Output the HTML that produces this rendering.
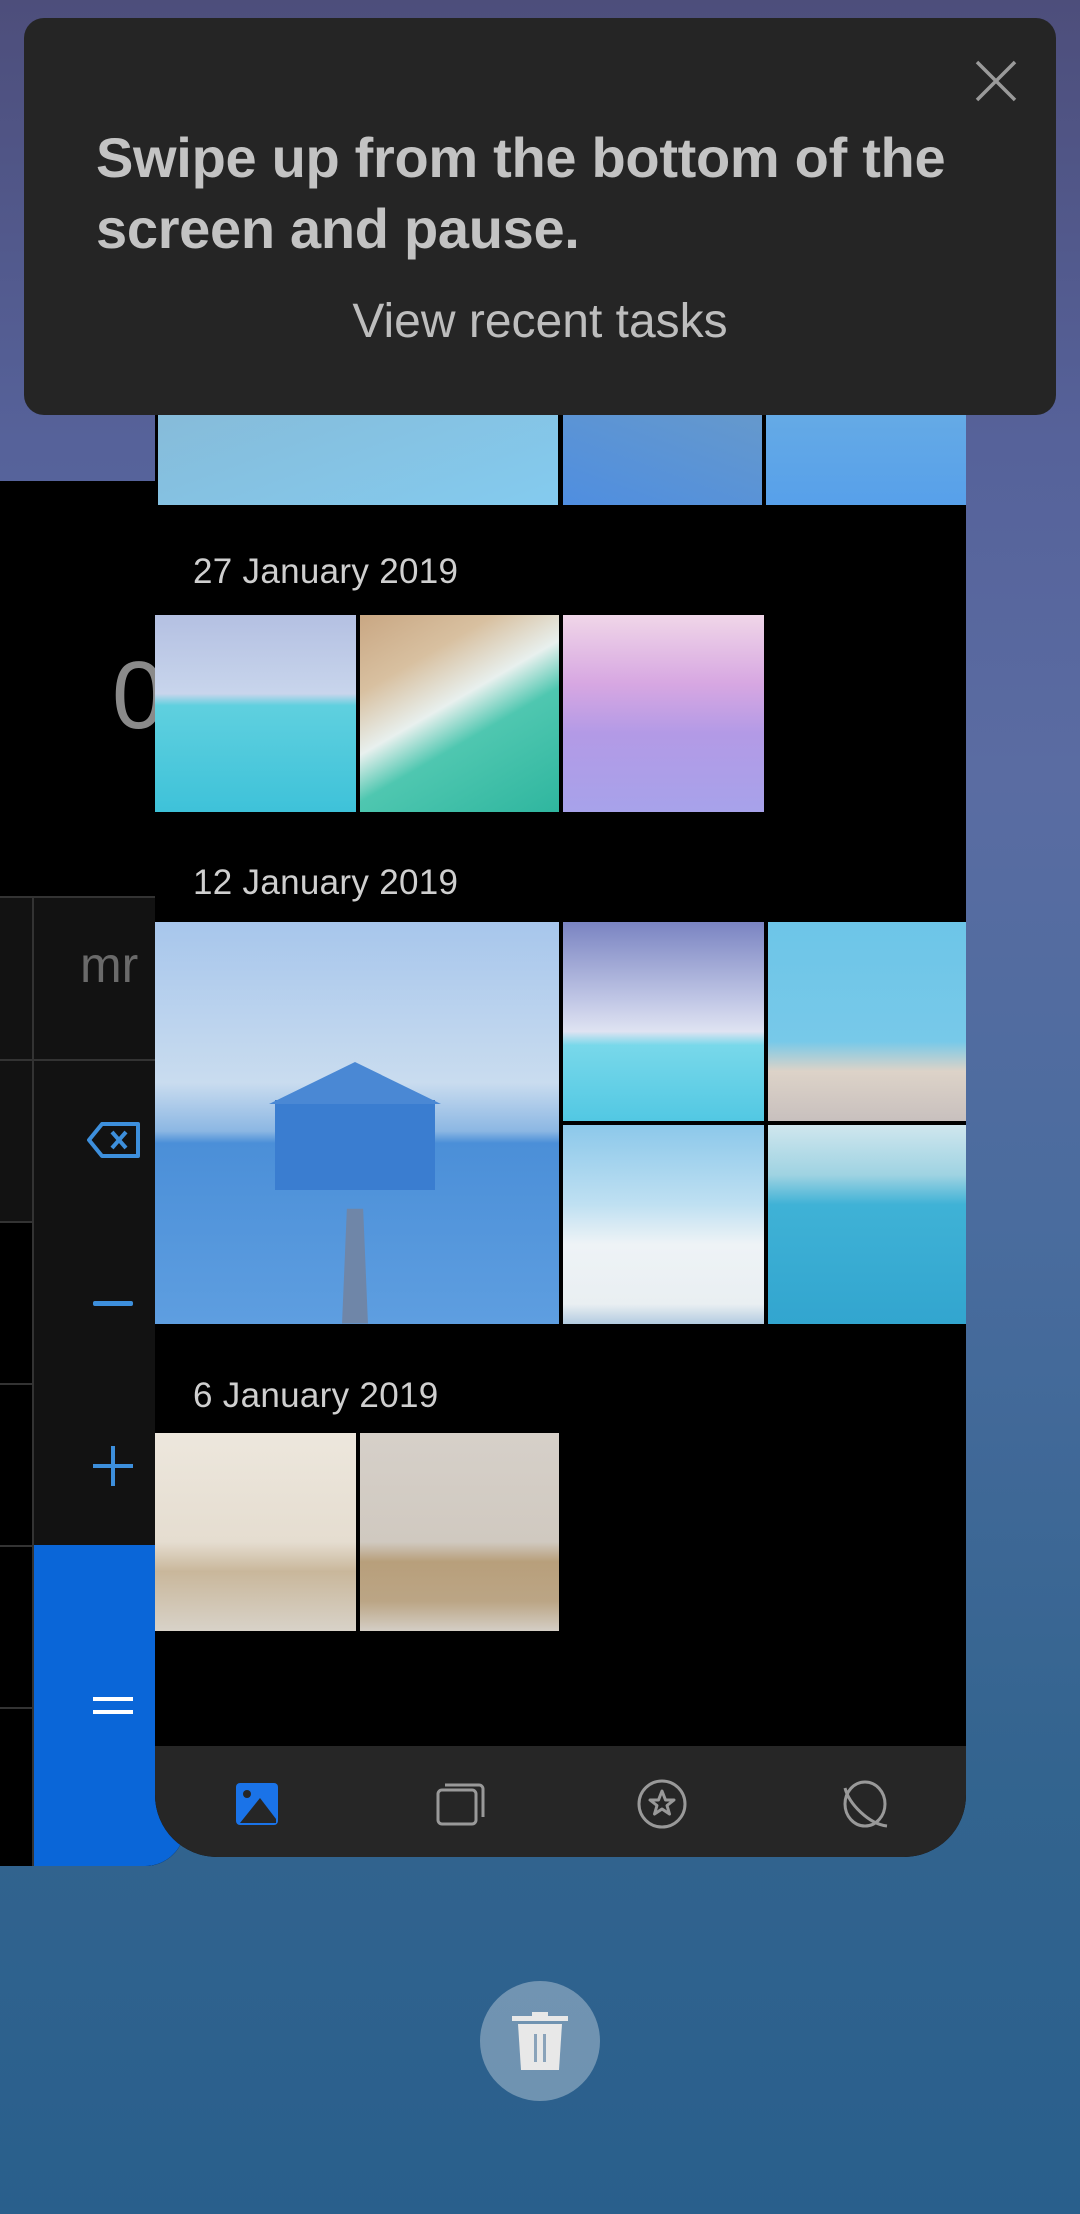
<!DOCTYPE html>
<html><head><meta charset="utf-8"><style>
*{margin:0;padding:0;box-sizing:border-box}
body{width:1080px;height:2214px;overflow:hidden;position:relative;font-family:"Liberation Sans",sans-serif;
background:linear-gradient(180deg,#4d4e7b 0%,#56629a 20%,#5a6ca2 35%,#4a6c9e 55%,#33648f 80%,#295f8c 100%)}
.abs{position:absolute}
.calc{left:0;top:481px;width:185px;height:1385px;background:#000;border-bottom-right-radius:40px;overflow:hidden}
.cell{position:absolute;left:0;width:185px;background:#121212;border-top:2px solid #333}
.divv{position:absolute;left:32px;top:415px;width:2px;height:1000px;background:#333}
.card{left:155px;top:380px;width:811px;height:1477px;background:#000;border-bottom-left-radius:62px;border-bottom-right-radius:62px;overflow:hidden}
.img{position:absolute}
.lbl{position:absolute;left:38px;color:#cfcfcf;font-size:35px;letter-spacing:0.3px}
.nav{position:absolute;left:0;bottom:0;width:100%;height:111px;background:#262626}
.tip{left:24px;top:18px;width:1032px;height:397px;background:#252525;border-radius:20px}
</style></head><body>

<div class="abs calc">
  <div class="abs" style="left:112px;top:160px;font-size:96px;color:#8a8a8a">0</div>
  <div class="cell" style="top:415px;height:163px"></div>
  <div class="cell" style="top:578px;height:162px"></div>
  <div class="cell" style="top:740px;height:162px;background:#000"></div>
  <div class="cell" style="top:902px;height:162px;background:#000"></div>
  <div class="cell" style="top:1064px;height:162px;background:#000"></div>
  <div class="cell" style="top:1226px;height:160px;background:#000"></div>
  <div class="abs" style="left:34px;top:740px;width:151px;height:324px;background:#121212"></div>
  <div class="abs" style="left:34px;top:1064px;width:151px;height:330px;background:#0a66d8;border-bottom-right-radius:40px"></div>
  <div class="divv"></div>
  <div class="abs" style="left:80px;top:455px;font-size:50px;color:#6a6a6a">mr</div>
  <svg class="abs" style="left:86px;top:640px" width="56" height="38" viewBox="0 0 56 38"><path d="M16 3H52V35H16L3 19Z" fill="none" stroke="#3d8fdc" stroke-width="4" stroke-linejoin="round"/><path d="M26 11L40 27M40 11L26 27" stroke="#3d8fdc" stroke-width="4"/></svg>
  <div class="abs" style="left:93px;top:820px;width:40px;height:5px;background:#3d8fdc;border-radius:2px"></div>
  <div class="abs" style="left:93px;top:983px;width:40px;height:4px;background:#3d8fdc"></div>
  <div class="abs" style="left:111px;top:965px;width:4px;height:40px;background:#3d8fdc"></div>
  <div class="abs" style="left:93px;top:1216px;width:40px;height:4px;background:#fff"></div>
  <div class="abs" style="left:93px;top:1229px;width:40px;height:4px;background:#fff"></div>
</div>

<div class="abs card">
  <div class="img" style="left:3px;top:0;width:400px;height:125px;background:linear-gradient(160deg,#86b9d6,#84cbef)"></div>
  <div class="img" style="left:408px;top:0;width:199px;height:125px;background:linear-gradient(200deg,#6a9bc8,#4f8ee0)"></div>
  <div class="img" style="left:611px;top:0;width:200px;height:125px;background:linear-gradient(180deg,#6aaee4,#57a0ea)"></div>
  <div class="lbl" style="top:172px">27 January 2019</div>
  <div class="img" style="left:0;top:235px;width:201px;height:197px;background:linear-gradient(180deg,#b4c0e2 0%,#c8d5ec 40%,#5fd0df 46%,#3ec2d9 100%)"></div>
  <div class="img" style="left:205px;top:235px;width:199px;height:197px;background:linear-gradient(150deg,#c9a783 0%,#d8c0a0 25%,#e8f0ee 45%,#4fc7b0 60%,#2fb69f 100%)"></div>
  <div class="img" style="left:408px;top:235px;width:201px;height:197px;background:linear-gradient(180deg,#f0d6e8 0%,#d7a7e2 35%,#b39ae6 60%,#a7a2ea 100%)"></div>
  <div class="lbl" style="top:483px">12 January 2019</div>
  <div class="img" style="left:0;top:542px;width:404px;height:402px;background:linear-gradient(180deg,#a7c6ec 0%,#c9dcef 40%,#8cb7e3 52%,#4b8fd8 55%,#5e9ee0 100%)">
    <div class="abs" style="left:120px;top:178px;width:160px;height:90px;background:#3a7dd0"></div>
    <div class="abs" style="left:114px;top:140px;width:0;height:0;border-left:86px solid transparent;border-right:86px solid transparent;border-bottom:42px solid #4a88d4"></div>
    <div class="abs" style="left:190px;top:260px;width:20px;height:142px;background:#6f86a8;transform:perspective(200px) rotateX(40deg)"></div>
  </div>
  <div class="img" style="left:408px;top:542px;width:201px;height:199px;background:linear-gradient(180deg,#7a84c2 0%,#c2c8e6 40%,#dfe3f2 55%,#78d8ea 62%,#52c8e3 100%)"></div>
  <div class="img" style="left:613px;top:542px;width:198px;height:199px;background:linear-gradient(180deg,#6dc5e8 0%,#77c9e9 60%,#ddd3c8 75%,#c8c0be 100%)"></div>
  <div class="img" style="left:408px;top:745px;width:201px;height:199px;background:linear-gradient(180deg,#8cc8ea 0%,#bfe0f2 40%,#eef3f6 60%,#e9eff2 90%,#b3cbe0 100%)"></div>
  <div class="img" style="left:613px;top:745px;width:198px;height:199px;background:linear-gradient(180deg,#cfe6ee 0%,#9fd3e2 25%,#3fb2d6 40%,#32a5cf 100%)"></div>
  <div class="lbl" style="top:996px">6 January 2019</div>
  <div class="img" style="left:0;top:1053px;width:201px;height:198px;background:linear-gradient(180deg,#ede7dd 0%,#e5ddd0 55%,#c9b79b 70%,#d8d2c8 100%)"></div>
  <div class="img" style="left:205px;top:1053px;width:199px;height:198px;background:linear-gradient(180deg,#d6d0c9 0%,#d0c9c0 55%,#b89f7b 65%,#bba585 85%,#d4cec5 100%)"></div>
  <div class="nav">
    <svg class="abs" style="left:79px;top:35px" width="46" height="46" viewBox="0 0 46 46"><rect x="2" y="2" width="42" height="42" rx="4" fill="#1a73e8"/><circle cx="13" cy="13" r="4" fill="#262626"/><path d="M6 42L26 17L42 38V42Z" fill="#262626"/></svg>
    <svg class="abs" style="left:280px;top:35px" width="52" height="46" viewBox="0 0 52 46"><rect x="3" y="9" width="38" height="34" rx="4" fill="none" stroke="#999" stroke-width="3"/><path d="M10 4H44a4 4 0 0 1 4 4V36" fill="none" stroke="#999" stroke-width="3"/></svg>
    <svg class="abs" style="left:481px;top:32px" width="52" height="52" viewBox="0 0 52 52"><circle cx="26" cy="26" r="23" fill="none" stroke="#999" stroke-width="3"/><path d="M26 13L29.5 22H38L31 27.5L33.5 36L26 31L18.5 36L21 27.5L14 22H22.5Z" fill="none" stroke="#999" stroke-width="3" stroke-linejoin="round"/></svg>
    <svg class="abs" style="left:684px;top:32px" width="52" height="52" viewBox="0 0 52 52"><ellipse cx="26" cy="26" rx="20" ry="22" fill="none" stroke="#999" stroke-width="3"/><path d="M6 10C10 26 30 46 48 48" fill="none" stroke="#999" stroke-width="3"/></svg>
  </div>
</div>

<div class="abs tip">
  <svg class="abs" style="left:950px;top:41px" width="44" height="44" viewBox="0 0 44 44"><path d="M3 3L41 41M41 3L3 41" stroke="#9a9a9a" stroke-width="3.5"/></svg>
  <div class="abs" style="left:72px;top:104px;font-size:56px;line-height:71px;color:#c3c3c3;font-weight:bold;letter-spacing:-0.3px;white-space:nowrap">Swipe up from the bottom of the<br>screen and pause.</div>
  <div class="abs" style="left:0;width:100%;top:276px;text-align:center;font-size:48px;color:#bdbdbd">View recent tasks</div>
</div>

<div class="abs" style="left:480px;top:1981px;width:120px;height:120px;border-radius:50%;background:rgba(255,255,255,0.32)"></div>
<svg class="abs" style="left:510px;top:2010px" width="60" height="62" viewBox="0 0 60 62"><path d="M22 2H38V6H58V11H2V6H22Z" fill="#e8e8e8"/><path d="M8 14H52L49 60H11Z" fill="#e8e8e8"/><rect x="24" y="24" width="3" height="28" fill="#8aa3ba"/><rect x="33" y="24" width="3" height="28" fill="#8aa3ba"/></svg>

</body></html>
